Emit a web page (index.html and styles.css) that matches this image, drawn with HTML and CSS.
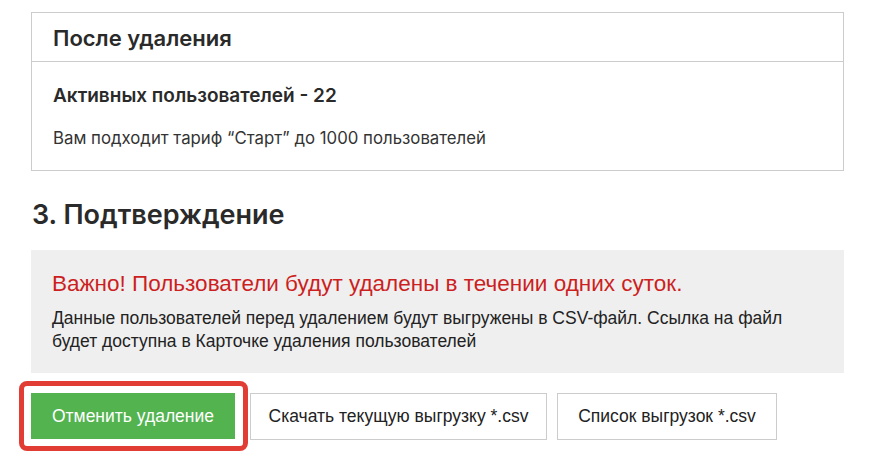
FILE: index.html
```html
<!DOCTYPE html>
<html lang="ru">
<head>
<meta charset="utf-8">
<link rel="stylesheet" href="styles.css">
</head>
<body>
<div class="page">
  <section class="card">
    <div class="card-head">После удаления</div>
    <div class="card-body">
      <div class="card-title">Активных пользователей - 22</div>
      <div class="card-text">Вам подходит тариф “Старт” до 1000 пользователей</div>
    </div>
  </section>

  <h2 class="step">3. Подтверждение</h2>

  <div class="notice">
    <div class="notice-title">Важно! Пользователи будут удалены в течении одних суток.</div>
    <div class="notice-text">Данные пользователей перед удалением будут выгружены в CSV-файл. Ссылка на файл<br>будет доступна в Карточке удаления пользователей</div>
  </div>

  <div class="actions">
    <span class="highlight"><button class="btn btn-green">Отменить удаление</button></span>
    <button class="btn btn-outline btn-download">Скачать текущую выгрузку *.csv</button>
    <button class="btn btn-outline btn-list">Список выгрузок *.csv</button>
  </div>
</div>
</body>
</html>
```

FILE: styles.css
```css
html, body {
  margin: 0;
  padding: 0;
  background: #ffffff;
}
.page {
  width: 813px;
  padding: 12px 0 0 31px;
  color: #2a2a2a;
  font-family: Inter, "Noto Sans", sans-serif;
}
.card {
  border: 1px solid #cccccc;
}
.card-head {
  height: 49px;
  box-sizing: border-box;
  padding: 12px 0 0 21px;
  font-size: 22px;
  font-weight: 600;
  line-height: 26px;
  border-bottom: 1px solid #cccccc;
}
.card-body {
  padding: 22px 21px 21px;
}
.card-title {
  font-size: 19px;
  font-weight: 600;
  line-height: 24px;
}
.card-text {
  margin-top: 19px;
  font-size: 16.8px;
  font-weight: 400;
  line-height: 22px;
  color: #333;
}
.step {
  margin: 27px 0 0 1px;
  font-size: 27px;
  font-weight: 600;
  line-height: 34px;
  color: #2a2a2a;
}
.notice {
  margin-top: 18px;
  background: #efefef;
  padding: 20px 21px 20px;
  font-family: "Liberation Sans", Arial, sans-serif;
}
.notice-title {
  font-size: 22.5px;
  line-height: 28px;
  color: #cc1f1f;
}
.notice-text {
  margin-top: 9px;
  font-size: 17.5px;
  line-height: 23px;
  color: #222;
}
.actions {
  display: flex;
  align-items: center;
  margin-top: 8px;
  margin-left: -12px;
}
.highlight {
  display: inline-flex;
  border: 5px solid #e13d34;
  border-radius: 8px;
  margin-right: 2px;
  padding: 7px 8px 7px 7px;
}
.btn {
  height: 46px;
  box-sizing: border-box;
  font-family: "Liberation Sans", Arial, sans-serif;
  font-size: 17.5px;
  cursor: pointer;
  border-radius: 0;
  padding: 0;
}
.btn-green {
  width: 204px;
  background: #52b34f;
  border: none;
  color: #ffffff;
}
.btn-outline {
  background: #ffffff;
  border: 1px solid #cccccc;
  color: #222;
  margin-right: 10px;
  height: 47px;
}
.btn-download {
  width: 297px;
}
.btn-list {
  width: 220px;
}
```
